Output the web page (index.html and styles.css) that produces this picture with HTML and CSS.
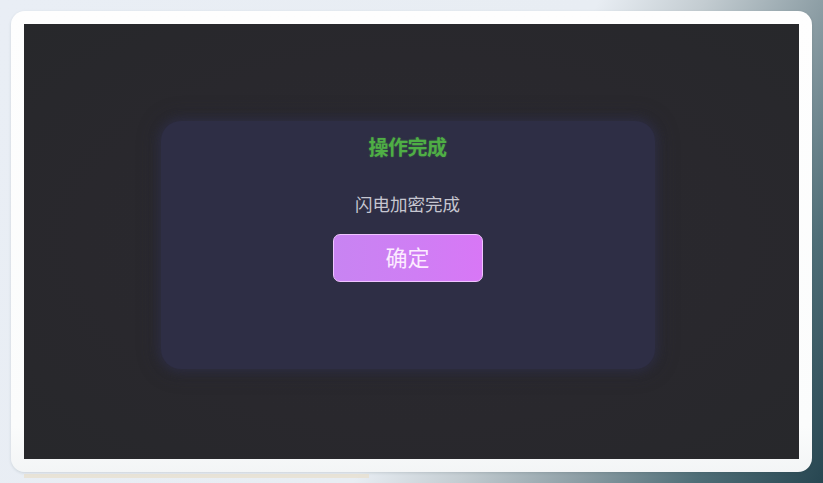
FILE: index.html
```html
<!DOCTYPE html>
<html lang="zh-CN">
<head>
<meta charset="utf-8">
<title>操作完成</title>
<link rel="stylesheet" href="styles.css">
</head>
<body>
  <div class="page">
    <div class="card">
      <div class="screen">
        <div class="dialog">
          <div class="dialog-title">操作完成</div>
          <div class="dialog-msg">闪电加密完成</div>
          <button class="dialog-btn" type="button">确定</button>
        </div>
      </div>
    </div>
    <div class="reflection"></div>
  </div>
</body>
</html>
```

FILE: styles.css
```css
html, body {
  margin: 0;
  padding: 0;
  width: 823px;
  height: 483px;
  overflow: hidden;
}
body {
  background: linear-gradient(117deg, #e9eef5 0%, #e8edf3 56%, #c3ccd1 66%, #8d9ea5 77%, #4f6e77 88%, #274651 100%);
  font-family: "Noto Sans CJK SC", "Noto Sans", sans-serif;
}
.page {
  padding: 11px 11px 0 11px;
  display: flex;
  flex-direction: column;
}
.card {
  height: 461px;
  background: linear-gradient(180deg, #fefefe 0%, #fbfcfc 90%, #f3f5f6 100%);
  border-radius: 14px;
  padding: 13px;
  box-sizing: border-box;
  box-shadow: 0 1px 3px rgba(40, 60, 70, 0.15);
  display: flex;
}
.screen {
  flex: 1;
  background: radial-gradient(ellipse at 50% 50%, #2a2930 0%, #29282d 60%, #27282b 100%);
  display: flex;
  align-items: center;
  justify-content: center;
}
.dialog {
  width: 494px;
  height: 248px;
  margin: 6px 0 0 -8px;
  box-sizing: border-box;
  background: #2e2e45;
  border-radius: 20px;
  box-shadow: 0 0 8px 3px rgba(46, 46, 69, 0.7), 0 0 18px 6px rgba(44, 44, 62, 0.35);
  padding-top: 13px;
  display: flex;
  flex-direction: column;
  align-items: center;
}
.dialog-title {
  font-size: 20px;
  line-height: 26px;
  font-weight: 700;
  color: #4fae45;
  letter-spacing: -0.5px;
  text-shadow: 0 0 2px rgba(80, 200, 70, 0.35);
}
.dialog-msg {
  margin-top: 32px;
  font-size: 17.5px;
  line-height: 24px;
  color: #c6c6d0;
}
.dialog-btn {
  margin-top: 18px;
  width: 150px;
  height: 48px;
  border: 1px solid #efc4ff;
  border-radius: 7px;
  background: linear-gradient(90deg, #c884f2 0%, #cf7ef4 55%, #d877f6 100%);
  color: #fcecff;
  font-family: "Noto Sans CJK SC", "Noto Sans", sans-serif;
  font-size: 22px;
  line-height: 42px;
  padding: 0 0 4px 0;
  cursor: pointer;
}
.reflection {
  margin: 2px 0 0 13px;
  width: 345px;
  height: 4px;
  background: #e7e0cf;
  opacity: 0.8;
}
```
